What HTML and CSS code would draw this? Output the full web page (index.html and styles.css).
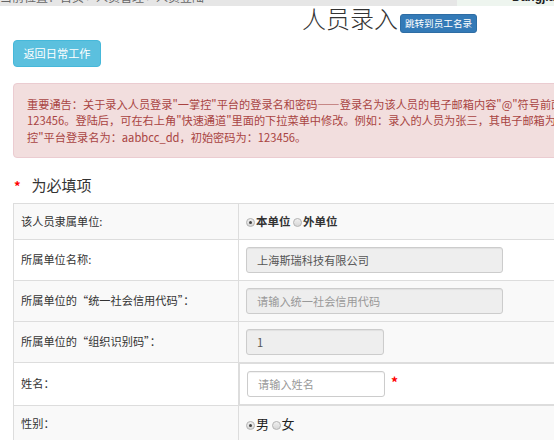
FILE: index.html
```html
<!DOCTYPE html>
<html lang="zh-CN">
<head>
<meta charset="utf-8">
<title>人员录入</title>
<link rel="stylesheet" href="styles.css">
</head>
<body>
<div class="topbar">
  <div class="topbar-left"><span class="topbar-text">当前位置：首页 &gt; 人员管理 &gt; 人员登陆</span></div>
  <div class="topbar-right"><span class="topbar-text dark">Dangjian</span></div>
</div>
<div class="page">
  <div class="title-row">
    <h2 class="title">人员录入</h2>
    <a class="btn btn-xs">跳转到员工名录</a>
  </div>
  <a class="btn btn-info">返回日常工作</a>
  <div class="alert">
    <div class="alert-line">重要通告：关于录入人员登录"一掌控"平台的登录名和密码——登录名为该人员的电子邮箱内容"@"符号前面的部分，初始密码为</div>
    <div class="alert-line">123456。登陆后，可在右上角"快速通道"里面的下拉菜单中修改。例如：录入的人员为张三，其电子邮箱为aabbcc_dd@xxx.com，则其"一掌</div>
    <div class="alert-line">控"平台登录名为：aabbcc_dd，初始密码为：123456。</div>
  </div>
  <h4 class="req"><span class="req-star">*</span>为必填项</h4>
  <table class="form-table">
    <colgroup><col class="col-label"><col></colgroup>
    <tbody>
      <tr class="stripe">
        <td>该人员隶属单位:</td>
        <td><span class="radio checked"></span><b class="opt">本单位</b> <span class="radio"></span><b class="opt">外单位</b></td>
      </tr>
      <tr>
        <td>所属单位名称:</td>
        <td><div class="input long disabled">上海斯瑞科技有限公司</div></td>
      </tr>
      <tr class="stripe">
        <td>所属单位的“统一社会信用代码”：</td>
        <td><div class="input long disabled placeholder">请输入统一社会信用代码</div></td>
      </tr>
      <tr class="stripe">
        <td>所属单位的“组织识别码”：</td>
        <td><div class="input short disabled">1</div></td>
      </tr>
      <tr>
        <td>姓名：</td>
        <td class="name-cell"><div class="input short placeholder">请输入姓名</div><span class="field-star">*</span></td>
      </tr>
      <tr class="stripe">
        <td>性别：</td>
        <td><span class="radio checked"></span><span class="sex">男</span> <span class="radio"></span><span class="sex">女</span></td>
      </tr>
      <tr>
        <td>民族：</td>
        <td></td>
      </tr>
    </tbody>
  </table>
</div>
</body>
</html>
```
FILE: styles.css
```css
html, body {
  margin: 0;
  padding: 0;
  overflow: hidden;
  background: #fff;
}
body {
  font-family: "Noto Sans CJK SC", "Noto Sans", sans-serif;
  font-size: 11.2px;
  color: #333;
}
.topbar {
  display: flex;
  height: 6px;
  overflow: hidden;
}
.topbar-left {
  width: 457px;
  background: #e6e6e6;
  overflow: hidden;
}
.topbar-right {
  flex: 1;
  background: #eef5ef;
  overflow: hidden;
  padding-left: 55px;
}
.topbar-text {
  display: block;
  font-size: 12px;
  line-height: 12px;
  margin-top: -9px;
  color: #666;
  white-space: nowrap;
}
.topbar-text.dark {
  color: #222;
  font-weight: bold;
  font-family: "Liberation Sans", sans-serif;
}
.page {
  width: 753px;
  padding-left: 13px;
}
.title-row {
  display: flex;
  justify-content: center;
  align-items: flex-start;
  gap: 2px;
}
.title {
  margin: 0;
  font-size: 24px;
  line-height: 24px;
  font-weight: 300;
  color: #333;
}
.btn {
  display: inline-block;
  box-sizing: border-box;
  color: #fff;
  text-align: center;
  white-space: nowrap;
  text-decoration: none;
  border: 1px solid transparent;
}
.btn-xs {
  margin-top: 8px;
  height: 19px;
  padding: 1px 4px;
  font-size: 9.6px;
  line-height: 15px;
  background: #337ab7;
  border-color: #2e6da4;
  border-radius: 3px;
}
.btn-info {
  display: block;
  width: 88px;
  height: 27px;
  margin-top: 7px;
  padding: 4px 0;
  font-size: 11.2px;
  line-height: 17px;
  background: #5bc0de;
  border-color: #46b8da;
  border-radius: 4px;
}
.alert {
  margin-top: 16px;
  padding: 12px 13px;
  background: #f2dede;
  border: 1px solid #ebccd1;
  border-radius: 4px;
  color: #a94442;
  font-size: 11.2px;
  line-height: 16.3px;
}
.alert-line {
  white-space: nowrap;
  overflow: hidden;
}
.req {
  margin: 17px 0 7px;
  font-size: 15px;
  line-height: 20px;
  font-weight: normal;
  color: #333;
}
.req-star {
  color: #f00;
  font-weight: bold;
  font-size: 13px;
  margin: 0 11px 0 1px;
}
.form-table {
  width: 100%;
  border-collapse: collapse;
  border: 1px solid #ddd;
}
.col-label {
  width: 225px;
}
.form-table td {
  border: 1px solid #ddd;
  padding: 7px;
  line-height: 21px;
  vertical-align: middle;
  font-size: 11.2px;
  color: #333;
}
.form-table tr.stripe td {
  background: #f9f9f9;
}
.radio {
  display: inline-block;
  box-sizing: border-box;
  width: 9px;
  height: 9px;
  border-radius: 50%;
  border: 1px solid #b5b5b5;
  background: linear-gradient(#f0f0f0, #d6d6d6);
  vertical-align: -1px;
  position: relative;
}
.radio.checked::after {
  content: "";
  position: absolute;
  left: 2px;
  top: 2px;
  width: 3px;
  height: 3px;
  border-radius: 50%;
  background: #444;
}
.opt {
  font-weight: bold;
  font-size: 11.5px;
  color: #333;
  margin-left: 1px;
}
.sex {
  font-size: 13px;
  color: #222;
  margin-left: 1px;
}
.input {
  box-sizing: border-box;
  height: 26px;
  padding: 0 10px;
  border: 1px solid #ccc;
  border-radius: 3px;
  background: #fff;
  font-size: 11.2px;
  line-height: 24px;
  color: #555;
  box-shadow: inset 0 1px 1px rgba(0,0,0,0.06);
}
.input.long {
  width: 257px;
}
.input.short {
  width: 138px;
}
.input.disabled {
  background: #eee;
}
.input.placeholder {
  color: #999;
}
.name-cell {
  display: flex;
  align-items: center;
}
.field-star {
  color: #f00;
  font-weight: bold;
  font-size: 14px;
  margin-left: 6px;
  line-height: 14px;
  margin-top: -4px;
}
```
